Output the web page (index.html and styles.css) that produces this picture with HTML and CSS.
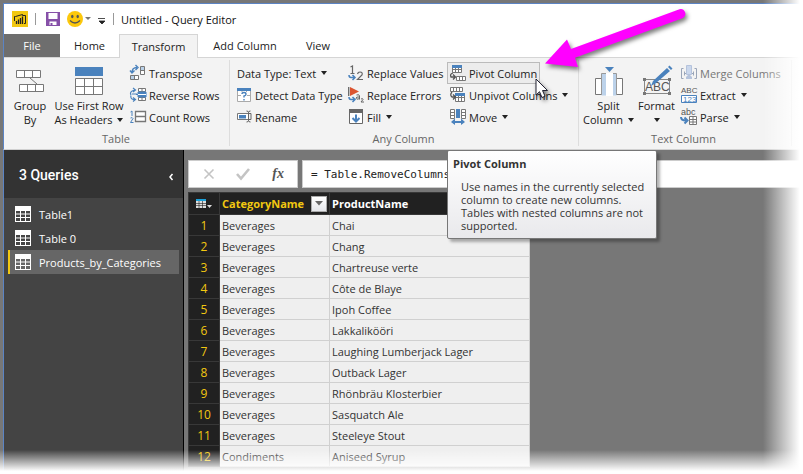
FILE: index.html
```html
<!DOCTYPE html>
<html lang="en">
<head>
<meta charset="utf-8">
<title>Untitled - Query Editor</title>
<link rel="stylesheet" href="styles.css">
</head>
<body>
<div class="window">
  <header class="titlebar">
    <svg class="logo" width="16" height="16" viewBox="0 0 16 16"><rect width="16" height="16" fill="#f2c811"/><path d="M2.500 10V5.500H3.500L10.500 3.500V4.500H13.500V12.500H12" fill="none" stroke="#222"/><path d="M4.500 10v3M6.500 8.500V13M8.500 7v6M10.500 5.500V13" stroke="#222" stroke-width="1.300"/></svg>
    <span class="divider"></span>
    <button class="quick save" aria-label="Save"><svg width="14" height="14" viewBox="0 0 14 14"><path d="M0 0H14V14H0Z" fill="#8650a8"/><path d="M2.500 1h9v6h-9zM3.500 9.500h7V13h-4v-2h-2v2h-1z" fill="#fff"/></svg></button>
    <button class="quick" aria-label="Feedback"><svg width="24" height="16" viewBox="0 0 24 16"><circle cx="8" cy="8" r="8" fill="#fcc80c"/><ellipse cx="5.300" cy="5.500" rx="1.200" ry="1.700" fill="#555"/><ellipse cx="10.700" cy="5.500" rx="1.200" ry="1.700" fill="#555"/><path d="M3 9.500Q8 14.500 13 9.500" fill="none" stroke="#555" stroke-width="1.300"/><path d="M18 6h6l-3 3z" fill="#777"/></svg></button>
    <button class="quick more" aria-label="Customize toolbar"><svg width="8" height="8" viewBox="0 0 8 8"><path d="M0 1.500H7M1 4h6L4 7z" fill="#222" stroke="#222" stroke-width=".8"/></svg></button>
    <span class="divider"></span>
    <h1 class="title">Untitled - Query Editor</h1>
  </header>

  <nav class="tabs">
    <button class="tab file">File</button>
    <button class="tab home">Home</button>
    <button class="tab active">Transform</button>
    <button class="tab add">Add Column</button>
    <button class="tab view">View</button>
  </nav>

  <section class="ribbon">
    <div class="group table-group">
      <div class="commands">
        <button class="big group-by">
          <svg width="28" height="30" viewBox="0 0 28 30"><path d="M14 12l7 6" stroke="#777" fill="none"/><path d="M.5 4.500h24v7h-24zM8.500 4.500v7M16.500 4.500v7M3.500 18.500h24v7h-24zM11.500 18.500v7M19.500 18.500v7" fill="#fff" stroke="#777"/></svg>
          <span>Group<br>By</span>
        </button>
        <button class="big headers">
          <svg width="28" height="30" viewBox="0 0 28 30"><path d="M0 1h28v9H0z" fill="#4a82bd"/><path d="M.5 12.500h27v16H.5zM9.500 12.500v16M18.500 12.500v16M.5 20.500h27" fill="#fff" stroke="#777"/></svg>
          <span>Use First Row<br>As Headers <i class="caret"></i></span>
        </button>
        <div class="stack">
          <button class="small"><svg width="16" height="16" viewBox="0 0 16 16"><path d="M10.500 1.500h4v8h-4zM10.500 5.500h4M.5 10.500h8v4h-8zM4.500 10.500v4" fill="#fff" stroke="#777"/><path d="M11 2h3v3h-3zM1 11h3v3H1z" fill="#b8d0e8"/><path d="M2 8C2 4 3.500 2.500 7 2.500M5.500 0l2.500 2.500-2.500 2.500M0 5.500L2 8l2.500-2.500" fill="none" stroke="#4a82bd" stroke-width="1.400"/></svg>Transpose</button>
          <button class="small"><svg width="16" height="16" viewBox="0 0 16 16"><path d="M8.500 1.500h7v3h-7zM12 1.500v3M8.500 10.500h7v3h-7zM12 10.500v3" fill="#fff" stroke="#777"/><path d="M8 5h8v5H8zM6 7.500h2" fill="#4a82bd" stroke="#4a82bd"/><path d="M8 7.500h8" stroke="#fff"/><path d="M5 3C0 4 0 6.500 1 8M3 1l2.500 2L3 5M1 8.500C0 11 2 13 5 12.500M3 10.500l2.500 2-2.500 2M2 7h5" fill="none" stroke="#4a82bd" stroke-width="1.200"/></svg>Reverse Rows</button>
          <button class="small"><svg width="16" height="16" viewBox="0 0 16 16"><path d="M5.500 2.500h10v10h-10zM5.500 7.500h10" fill="#fff" stroke="#777" stroke-width="1.300"/><path d="M.5 3L2 2v5M.5 9q2-1 2.500.5L.5 13.500h3" fill="none" stroke="#4a82bd"/></svg>Count Rows</button>
        </div>
      </div>
      <h2 class="caption">Table</h2>
    </div>

    <div class="group any-group">
      <div class="commands">
        <div class="stack">
          <button class="small">Data Type: Text <i class="caret"></i></button>
          <button class="small"><svg width="15" height="16" viewBox="0 0 15 16"><path d="M.5 3.500h13v11H.5zM.5 8.500h13M5 3.500v11M9.500 3.500v11" fill="#fff" stroke="#aaa"/><path d="M0 1h14v3H0z" fill="#4a82bd"/><path d="M4 5h6v9H4z" fill="#fff"/><path d="M5 7q0-1.500 2-1.500T9 7.200Q9 8.500 7 9v1.500M7 12v1.500" fill="none" stroke="#4a82bd" stroke-width="1.400"/></svg>Detect Data Type</button>
          <button class="small"><svg width="15" height="16" viewBox="0 0 15 16"><path d="M.5 4.500h11v6H.5z" fill="#fff" stroke="#777"/><path d="M2 6h7v3.500H2z" fill="#4a82bd"/><path d="M9.500 2q2 0 2 1.500v8q0 1.500-2 1.500M13.500 2q-2 0-2 1.500v8q0 1.500 2 1.500M12 4.500h2v6h-2" fill="none" stroke="#666"/></svg>Rename</button>
        </div>
        <div class="stack">
          <button class="small"><svg width="16" height="16" viewBox="0 0 16 16"><path d="M2.500 2L4.500 1v7M2.500 8.500h4M9.500 9q.5-2 2.500-2 3 0 2 3L9.500 14.500H15" fill="none" stroke="#666" stroke-width="1.200"/><path d="M1 10q0 2.500 2 2.500h3M4.500 10l2.500 2.500L4.500 15" fill="none" stroke="#4a82bd" stroke-width="1.500"/></svg>Replace Values</button>
          <button class="small"><svg width="16" height="16" viewBox="0 0 16 16"><path d="M.7 0v9" stroke="#666" stroke-width="1.300"/><path d="M2 0l9 4.500L2 9z" fill="#dc5430"/><path d="M1 10q0 2.500 2 2.500h3M4.500 10l2.500 2.500L4.500 15" fill="none" stroke="#4a82bd" stroke-width="1.500"/><path d="M8.500 8q3-1 3 1v3.500M11.500 10q-3.500-.5-3.500 1.200t3.500.5M13 12q2-1 2 .5L13 15h3" fill="none" stroke="#666"/></svg>Replace Errors</button>
          <button class="small"><svg width="16" height="16" viewBox="0 0 16 16"><path d="M1.500 1.500h13v13h-13z" fill="#fff" stroke="#666"/><path d="M1 0h14v4H1z" fill="#666"/><path d="M8 5.500v7M4.500 9L8 12.500 11.500 9" fill="none" stroke="#4a82bd" stroke-width="2"/></svg>Fill <i class="caret"></i></button>
        </div>
        <div class="stack pivot-stack">
          <button class="small hovered" aria-describedby="pivot-tip"><svg width="16" height="16" viewBox="0 0 16 16"><path d="M2.500 1.500h9v6h-9zM5.500 1.500v6M8.500 1.500v6M2.500 4.500h9M6.500 11.500h9v4h-9zM9.500 11.500v4M12.500 11.500v4" fill="#fff" stroke="#777"/><path d="M2 0h10v3H2z" fill="#4a82bd"/><path d="M3 8Q-.5 9 1 12h4M3 9.500L5.500 12 3 14.500" fill="none" stroke="#555" stroke-width="1.300"/></svg>Pivot Column</button>
          <button class="small"><svg width="16" height="16" viewBox="0 0 16 16"><path d="M.5.500h12v4H.5zM3.500.500v4M6.500.500v4M9.500.500v4M5.500 6.500h9v8h-9zM8.500 6.500v8M11.500 6.500v8M5.500 10.500h9" fill="#fff" stroke="#777"/><path d="M5 6h10v3H5z" fill="#4a82bd"/><path d="M2 5Q-.5 8 2 10h3M3 7.500L5.500 10 3 12.500" fill="none" stroke="#555" stroke-width="1.300"/></svg>Unpivot Columns <i class="caret"></i></button>
          <button class="small"><svg width="16" height="16" viewBox="0 0 16 16"><path d="M.5.500h4v9h-4zM.5 3.500h4M.5 6.500h4M11.500.500h4v9h-4zM11.500 3.500h4M11.500 6.500h4" fill="#fff" stroke="#777"/><path d="M6 0h4v9H6zM1 13l4-3.500V12h6V9.500l4 3.500-4 3v-2H5v2z" fill="#4a82bd"/></svg>Move <i class="caret"></i></button>
        </div>
      </div>
      <h2 class="caption">Any Column</h2>
    </div>

    <div class="group text-group">
      <div class="commands">
        <button class="big split">
          <svg width="28" height="30" viewBox="0 0 28 30"><path d="M6.500 12.500h-6v16h6M21.500 12.500h6v16h-6" fill="#fff" stroke="#777"/><path d="M10 1h9l-4.500 5z" fill="#4a82bd"/><path d="M6.500 7.500h15v22h-15z" fill="#bcd2ea"/><path d="M11 7h7v23h-7z" fill="#fff"/><path d="M6.500 29V7.500h4.500M18 7.500h3.500V29" fill="none" stroke="#999"/></svg>
          <span>Split<br>Column <i class="caret"></i></span>
        </button>
        <button class="big format">
          <svg width="30" height="30" viewBox="0 0 30 30"><path d="M2.500 13.500h25v14h-25z" fill="none" stroke="#888"/><path d="M1 12h3v3H1zM26 12h3v3h-3zM1 26h3v3H1zM26 26h3v3h-3z" fill="#777"/><text x="3" y="25" class="icon-text format-text">ABC</text><path d="M9 20l2-5L25 2l3 3-14 12zM26 1l1.500-1.500 3 3L29 4z" fill="#4a82bd"/></svg>
          <span>Format<br><i class="caret"></i></span>
        </button>
        <div class="stack">
          <button class="small" disabled><svg width="16" height="16" viewBox="0 0 16 16"><path d="M2.500 3.500h-2v10h2M13.500 3.500h2v10h-2M4 8.500h8M3.500 6.500v4M12.500 6.500v4" fill="none" stroke="#9aa5b8"/><path d="M5.500.500h5v9h-5z" fill="#cad7ec" stroke="#b5c3dc"/><path d="M5 12l3-3 3 3v2H5z" fill="#b5c3dc"/></svg>Merge Columns</button>
          <button class="small"><svg width="16" height="18" viewBox="0 0 16 18"><text x="0" y="7" class="icon-text tiny">ABC</text><path d="M.5 9.500h15v7H.5z" fill="#fff" stroke="#4a82bd"/><text x="2" y="16" class="icon-text tiny blue">123</text></svg>Extract <i class="caret"></i></button>
          <button class="small"><svg width="16" height="18" viewBox="0 0 16 18"><text x="0" y="7" class="icon-text small-letters">abc</text><path d="M8.500 8.500h7v8h-7zM12 8.500v8M8.500 11.500h7M8.500 14h7" fill="#fff" stroke="#777"/><path d="M0 9q0 3.500 5 3.500M3.500 9.500l3 3-3 3" fill="none" stroke="#4a82bd" stroke-width="2"/></svg>Parse <i class="caret"></i></button>
        </div>
      </div>
      <h2 class="caption">Text Column</h2>
    </div>
  </section>

  <main class="workspace">
    <aside class="sidebar">
      <div class="sidebar-head">
        <h2>3 Queries</h2>
        <button class="collapse" aria-label="Collapse"><svg width="4" height="6" viewBox="0 0 4 6"><path d="M3.500 0L1 3l2.500 3" fill="none" stroke="#fff" stroke-width="1.500"/></svg></button>
      </div>
      <ul class="queries">
        <li><a href="#"><svg width="16" height="16" viewBox="0 0 16 16"><path d="M0 0h16v16H0z" fill="#fff"/><path d="M1 5h4v2.500H1zM6 5h4v2.500H6zM11 5h4v2.500h-4zM1 8.500h4V11H1zM6 8.500h4V11H6zM11 8.500h4V11h-4zM1 12h4v3H1zM6 12h4v3H6zM11 12h4v3h-4z" fill="#444"/></svg>Table1</a></li>
        <li><a href="#"><svg width="16" height="16" viewBox="0 0 16 16"><path d="M0 0h16v16H0z" fill="#fff"/><path d="M1 5h4v2.500H1zM6 5h4v2.500H6zM11 5h4v2.500h-4zM1 8.500h4V11H1zM6 8.500h4V11H6zM11 8.500h4V11h-4zM1 12h4v3H1zM6 12h4v3H6zM11 12h4v3h-4z" fill="#444"/></svg>Table 0</a></li>
        <li class="selected"><a href="#"><svg width="16" height="16" viewBox="0 0 16 16"><path d="M0 0h16v16H0z" fill="#fff"/><path d="M1 5h4v2.500H1zM6 5h4v2.500H6zM11 5h4v2.500h-4zM1 8.500h4V11H1zM6 8.500h4V11H6zM11 8.500h4V11h-4zM1 12h4v3H1zM6 12h4v3H6zM11 12h4v3h-4z" fill="#666"/></svg>Products_by_Categories</a></li>
      </ul>
    </aside>

    <section class="content">
      <div class="formula-bar">
        <div class="formula-tools">
          <button aria-label="Cancel"><svg width="10" height="10" viewBox="0 0 10 10"><path d="M.5.500l9 9M9.500.500l-9 9" stroke="#c4c4c4" stroke-width="1.600"/></svg></button>
          <button aria-label="Accept"><svg width="14" height="12" viewBox="0 0 14 12"><path d="M1 6l4 4.500L13 1" fill="none" stroke="#c4c4c4" stroke-width="2.600"/></svg></button>
          <button class="fx">fx</button>
        </div>
        <input class="formula" type="text" aria-label="Formula" value="= Table.RemoveColumns">
      </div>
      <table class="grid">
        <colgroup><col class="col-num"><col class="col-cat"><col class="col-prod"></colgroup>
        <thead>
          <tr>
            <th class="corner"><button aria-label="Table options"><svg width="16" height="10" viewBox="0 0 16 10"><path d="M0 0h10v9H0z" fill="#ddd"/><path d="M0 0h10v2H0z" fill="#1ba0d8"/><path d="M0 4.500h10M0 6.500h10M3 2v7M6.500 2v7" stroke="#222" stroke-width=".6"/><path d="M11 6h5l-2.500 3z" fill="#ddd"/></svg></button></th>
            <th class="category"><div>CategoryName<button class="filter" aria-label="Filter CategoryName"><svg width="8" height="5" viewBox="0 0 8 5"><path d="M0 0h8L4 4.500z" fill="#666"/></svg></button></div></th>
            <th>ProductName</th>
          </tr>
        </thead>
        <tbody>
          <tr><th>1</th><td>Beverages</td><td>Chai</td></tr>
          <tr><th>2</th><td>Beverages</td><td>Chang</td></tr>
          <tr><th>3</th><td>Beverages</td><td>Chartreuse verte</td></tr>
          <tr><th>4</th><td>Beverages</td><td>Côte de Blaye</td></tr>
          <tr><th>5</th><td>Beverages</td><td>Ipoh Coffee</td></tr>
          <tr><th>6</th><td>Beverages</td><td>Lakkalikööri</td></tr>
          <tr><th>7</th><td>Beverages</td><td>Laughing Lumberjack Lager</td></tr>
          <tr><th>8</th><td>Beverages</td><td>Outback Lager</td></tr>
          <tr><th>9</th><td>Beverages</td><td>Rhönbräu Klosterbier</td></tr>
          <tr><th>10</th><td>Beverages</td><td>Sasquatch Ale</td></tr>
          <tr><th>11</th><td>Beverages</td><td>Steeleye Stout</td></tr>
          <tr><th>12</th><td>Condiments</td><td>Aniseed Syrup</td></tr>
        </tbody>
      </table>
    </section>
  </main>
</div>

<div class="tooltip" id="pivot-tip" role="tooltip">
  <strong>Pivot Column</strong>
  <p>Use names in the currently selected column to create new columns. Tables with nested columns are not supported.</p>
</div>
<svg class="arrow" width="160" height="80" viewBox="0 0 160 80"><path d="M5 63.500L27 39.500 31 49 139.500 9.200A4.800 4.800 0 0 1 143 18L35 57.700 38 67z" fill="#f0f"/></svg>
<svg class="cursor" width="16" height="24" viewBox="0 0 16 24"><path d="M1 1V17L4.500 13.700 7 19.500 10 18.200 7.500 12.500H12.500z" fill="#fff" stroke="#223" stroke-linejoin="round"/></svg>
</body>
</html>
```
FILE: styles.css
```css
* { box-sizing: border-box; }

body {
  margin: 0;
  height: 100vh;
  overflow: hidden;
  position: relative;
  background: #777;
  color: #222;
  font: 11px/13px "Open Sans", "Noto Sans", sans-serif;
}

/* The scene fades to white at the right and bottom edges */
body::before,
body::after {
  content: "";
  position: absolute;
  z-index: 5;
  right: 0;
  bottom: 0;
  pointer-events: none;
}
body::before {
  top: 0;
  width: 40px;
  background: linear-gradient(to right, transparent, #fff 92%);
}
body::after {
  left: 0;
  height: 24px;
  background: linear-gradient(to bottom, transparent, #fff 88%);
}

button {
  padding: 0;
  border: 0;
  background: none;
  color: inherit;
  font: inherit;
}
h1, h2, p, ul { margin: 0; padding: 0; font: inherit; }
svg { flex: none; display: block; overflow: visible; }

.window {
  display: flex;
  flex-direction: column;
  height: 100%;
  padding: 3px 0 0 3px;
}
.titlebar, .tabs, .ribbon, .workspace { border-left: 1px solid #5b84c4; }

.titlebar {
  display: flex;
  align-items: center;
  height: 31px;
  padding-left: 8px;
  border-top: 1px solid #5b84c4;
  background: #fff;
}
.divider { width: 1px; height: 12px; margin-left: 7px; background: #999; }
.quick { display: flex; margin-left: 7px; }
.save { margin-left: 10px; }
.more { margin-top: 4px; }
.title { margin-left: 7px; color: #111; }

.tabs {
  display: flex;
  height: 24px;
  background: linear-gradient(#d5d5d5, #d5d5d5) bottom / 100% 1px no-repeat #fff;
}
.tab { width: 59px; padding-bottom: 1px; }
.file { width: 56px; height: 23px; background: #6e6e6e; color: #fff; }
.active {
  width: 79px;
  border: 1px solid #d5d5d5;
  border-bottom: 0;
  background: #f3f3f3;
}
.add { width: 94px; }
.view { width: 52px; }

.ribbon {
  display: flex;
  background: #f3f3f3;
  border-bottom: 1px solid #d0d0d0;
}
.group { padding-top: 4px; position: relative; flex: none; }
.group::after {
  content: "";
  position: absolute;
  top: 2px;
  right: 0;
  bottom: 3px;
  width: 1px;
  background: #ddd;
}
.table-group { width: 226px; padding-left: 6px; }
.any-group { width: 349px; padding-left: 6px; }
.text-group { width: 213px; padding-left: 4px; }
.commands { display: flex; height: 66px; }
.caption { padding: 3px 8px 3px 0; line-height: 15px; text-align: center; color: #666; }

.big {
  display: flex;
  flex-direction: column;
  align-items: center;
  gap: 3px;
  padding-top: 4px;
  line-height: 14px;
}
.group-by { width: 40px; }
.headers { width: 78px; }
.split { width: 51px; }
.format { width: 45px; margin-right: 1px; }
.caret {
  display: inline-block;
  margin-left: 2px;
  border: 3px solid transparent;
  border-top: 4px solid #222;
  border-bottom: 0;
  vertical-align: 2px;
}
.stack { display: flex; flex-direction: column; align-items: flex-start; }
.table-group .stack { padding-left: 1px; }
.any-group .stack { width: 111px; }
.any-group .pivot-stack { width: 130px; margin-left: -11px; }
.small {
  display: flex;
  align-items: center;
  gap: 3px;
  height: 22px;
  border: 1px solid transparent;
  white-space: nowrap;
}
.pivot-stack .small { padding: 0 2px; }
.small:disabled { color: #777; }
.small.hovered { border-color: #bbb; background: #ececec; }

.icon-text { font-family: "Liberation Sans", sans-serif; fill: #555; }
.format-text { font-size: 12px; }
.tiny { font-size: 8px; }
.small-letters { font-size: 9px; }
.blue { fill: #4a82bd; }

.workspace { display: flex; flex: 1; min-height: 0; }
.sidebar {
  flex: none;
  width: 180px;
  border-right: 1px solid #000;
  background: #444;
  color: #fff;
}
.sidebar-head {
  display: flex;
  align-items: center;
  justify-content: space-between;
  height: 48px;
  padding: 2px 10px 0 15px;
  background: #333;
  font: 500 14px/18px Roboto, sans-serif;
}
.collapse { padding-top: 4px; }
.queries { padding: 4px 4px 0; list-style: none; }
.queries li { border-left: 2px solid transparent; }
.queries a {
  display: flex;
  align-items: center;
  gap: 8px;
  height: 24px;
  padding-left: 5px;
  color: #fff;
  text-decoration: none;
}
.queries .selected { border-color: #f2c811; background: #666; }

.content { flex: 1; min-width: 0; padding: 10px 0 0 4px; }
.formula-bar { display: flex; gap: 4px; height: 28px; }
.formula-tools {
  display: flex;
  align-items: center;
  justify-content: space-between;
  width: 110px;
  padding: 0 13px 0 15px;
  border: 1px solid #ccc;
  background: #fff;
}
.fx { color: #555; font: italic bold 14px/18px "Liberation Serif", serif; }
.formula {
  flex: 1;
  min-width: 0;
  padding: 0 8px;
  border: 1px solid #ccc;
  background: #fff;
  color: #222;
  font: 11px "DejaVu Sans Mono", monospace;
}

.grid {
  width: 342px;
  margin-top: 4px;
  border-collapse: collapse;
  table-layout: fixed;
  background: #efefef;
  color: #333;
}
.col-num { width: 31px; }
.col-cat { width: 110px; }
.grid td, .grid th {
  height: 21px;
  padding: 0 2px;
  border: 1px solid #d0d0d0;
  text-align: left;
}
.grid th { border-color: #383838; background: #212121; color: #fff; }
.grid thead th { height: 22px; }
.grid tbody th {
  color: #f2c811;
  font-size: 12px;
  font-weight: 400;
  text-align: center;
}
.grid .corner button { display: flex; margin: 0 auto; }
.grid thead .category { color: #f2c811; }
.category div { display: flex; align-items: center; justify-content: space-between; }
.filter {
  display: flex;
  align-items: center;
  justify-content: center;
  width: 16px;
  height: 16px;
  border: 1px solid #aaa;
  background: linear-gradient(#fff, #e4e6ea);
}

/* Annotations that float over the window */
.tooltip {
  position: absolute;
  z-index: 2;
  left: 447px;
  top: 150px;
  width: 210px;
  padding: 6px 5px;
  border: 1px solid #777;
  border-radius: 2px;
  background: linear-gradient(#fff, #e9e9ec);
  box-shadow: 3px 3px 3px rgba(0, 0, 0, .3);
  color: #333;
}
.tooltip p { padding: 10px 0 0 8px; }
.arrow {
  position: absolute;
  z-index: 6;
  left: 540px;
  top: 0;
  filter: drop-shadow(2px 3px 2px rgba(0, 0, 0, .5));
}
.cursor {
  position: absolute;
  z-index: 3;
  left: 535px;
  top: 78px;
  filter: drop-shadow(2px 3px 2px rgba(0, 0, 0, .5));
}
```
